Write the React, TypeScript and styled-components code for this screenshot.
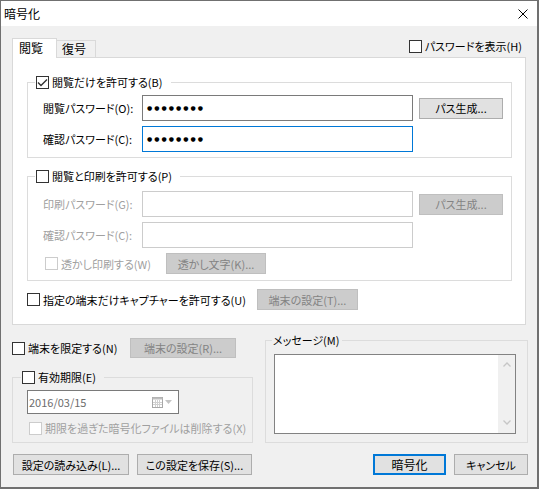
import React from "react";
import styled, { createGlobalStyle, css } from "styled-components";

const GlobalStyle = createGlobalStyle`
  html, body {
    margin: 0;
    padding: 0;
    background: #6f6f6f;
  }
  body {
    font-family: "Noto Sans CJK JP", "Noto Sans", sans-serif;
    font-size: 11px;
    color: #000;
    font-feature-settings: "palt";
  }
  #root {
    width: 539px;
    height: 489px;
  }
`;

/**
 * small parts
 */
function CheckBox({ checked, disabled }: { checked?: boolean; disabled?: boolean }) {
  return (
    <StyledBox $disabled={disabled}>
      {checked && (
        <svg width="11" height="11" viewBox="0 0 11 11">
          <polyline points="1,5.5 4,8.5 10,2.5" fill="none" stroke="#333" strokeWidth="1.4" />
        </svg>
      )}
    </StyledBox>
  );
}

function Check({
  label,
  checked,
  disabled,
}: {
  label: string;
  checked?: boolean;
  disabled?: boolean;
}) {
  return (
    <StyledCheck $disabled={disabled}>
      <CheckBox checked={checked} disabled={disabled} />
      <span>{label}</span>
    </StyledCheck>
  );
}

function Dots() {
  return <StyledDots>●●●●●●●●</StyledDots>;
}

export default function App() {
  return (
    <>
      <GlobalStyle />
      <Window>
        <TitleBar>
          <Title>暗号化</Title>
          <svg width="10" height="10" viewBox="0 0 10 10">
            <path d="M0.5 0.5 L9.5 9.5 M9.5 0.5 L0.5 9.5" stroke="#000" strokeWidth="1" />
          </svg>
        </TitleBar>

        <Body>
          <TabRow>
            <Tab $active>閲覧</Tab>
            <Tab>復号</Tab>
            <ShowPass>
              <Check label="パスワードを表示(H)" />
            </ShowPass>
          </TabRow>

          <Panel>
            <Group $mt={17}>
              <Legend $ml={7} $pr={8}>
                <Check label="閲覧だけを許可する(B)" checked />
              </Legend>
              <GroupBody $pad="6px 0 5px 15px">
                <FormRow>
                  <FieldLabel>閲覧パスワード(O):</FieldLabel>
                  <Field>
                    <Dots />
                  </Field>
                  <Button $w={84} $h={21}>パス生成...</Button>
                </FormRow>
                <FormRow>
                  <FieldLabel>確認パスワード(C):</FieldLabel>
                  <Field $state="focus">
                    <Dots />
                  </Field>
                </FormRow>
              </GroupBody>
            </Group>

            <Group $mt={11}>
              <Legend $ml={7} $pr={8}>
                <Check label="閲覧と印刷を許可する(P)" />
              </Legend>
              <GroupBody $pad="8px 0 6px 15px">
                <FormRow>
                  <FieldLabel $disabled>印刷パスワード(G):</FieldLabel>
                  <Field $state="disabled" />
                  <Button $w={84} $h={21} $kind="disabled">
                    パス生成...
                  </Button>
                </FormRow>
                <FormRow>
                  <FieldLabel $disabled>確認パスワード(C):</FieldLabel>
                  <Field $state="disabled" />
                </FormRow>
                <OptionRow $cols="121px 100px" $ml={2}>
                  <Check label="透かし印刷する(W)" disabled />
                  <Button $w={100} $h={21} $kind="disabled">
                    透かし文字(K)...
                  </Button>
                </OptionRow>
              </GroupBody>
            </Group>

            <OptionRow $cols="230px 101px" $mt={8}>
              <Check label="指定の端末だけキャプチャーを許可する(U)" />
              <Button $w={101} $h={21} $kind="disabled">
                端末の設定(T)...
              </Button>
            </OptionRow>
          </Panel>

          <BottomArea>
            <LeftColumn>
              <OptionRow $cols="118px 106px">
                <Check label="端末を限定する(N)" />
                <Button $w={106} $h={20} $kind="disabled">
                  端末の設定(R)...
                </Button>
              </OptionRow>

              <Group $mt={12}>
                <Legend $ml={8} $pr={8}>
                  <Check label="有効期限(E)" />
                </Legend>
                <GroupBody $pad="6px 0 7px 14px" $gap={7}>
                  <DatePicker>
                    <span>2016/03/15</span>
                    <PickerIcons>
                      <svg width="11" height="11" viewBox="0 0 11 11">
                        <rect x="0.5" y="0.5" width="10" height="10" fill="#fff" stroke="#a8a8a8" />
                        <rect x="0.5" y="0.5" width="10" height="2" fill="#bdbdbd" />
                        <path
                          d="M3.5 3 V10 M5.5 3 V10 M7.5 3 V10 M1 5.5 H10 M1 7.5 H10"
                          stroke="#d0d0d0"
                          strokeWidth="1"
                        />
                      </svg>
                      <svg width="7" height="4" viewBox="0 0 7 4">
                        <polygon points="0,0 7,0 3.5,4" fill="#c4c4c4" />
                      </svg>
                    </PickerIcons>
                  </DatePicker>
                  <ExpireRow>
                    <Check label="期限を過ぎた暗号化ファイルは削除する(X)" disabled />
                  </ExpireRow>
                </GroupBody>
              </Group>
            </LeftColumn>

            <Group $mt={0}>
              <Legend $ml={6} $pr={3}>
                <LegendText>メッセージ(M)</LegendText>
              </Legend>
              <GroupBody $pad="7px 11px 8px 8px">
                <MessageBox>
                  <MessageText />
                  <ScrollBar>
                    <svg width="8" height="5" viewBox="0 0 8 5">
                      <polyline points="0.5,4.5 4,1 7.5,4.5" fill="none" stroke="#c6c6c6" strokeWidth="1.3" />
                    </svg>
                    <svg width="8" height="5" viewBox="0 0 8 5">
                      <polyline points="0.5,0.5 4,4 7.5,0.5" fill="none" stroke="#c6c6c6" strokeWidth="1.3" />
                    </svg>
                  </ScrollBar>
                </MessageBox>
              </GroupBody>
            </Group>
          </BottomArea>

          <ButtonBar>
            <ButtonGroup>
              <Button $w={116} $h={21}>設定の読み込み(L)...</Button>
              <Button $w={115} $h={21}>この設定を保存(S)...</Button>
            </ButtonGroup>
            <ButtonGroup>
              <Button $w={73} $h={21} $kind="default">
                暗号化
              </Button>
              <Button $w={74} $h={21}>キャンセル</Button>
            </ButtonGroup>
          </ButtonBar>
        </Body>
      </Window>
    </>
  );
}

/**
 * styles
 */
const Window = styled.div`
  width: 539px;
  height: 489px;
  box-sizing: border-box;
  border: 1px solid #707070;
  border-right-width: 2px;
  border-bottom-width: 2px;
  display: flex;
  flex-direction: column;
  background: #f0f0f0;
`;

const TitleBar = styled.div`
  height: 25px;
  flex-shrink: 0;
  background: #fff;
  display: flex;
  align-items: center;
  justify-content: space-between;
  padding: 0 9px 0 3px;
  line-height: 14px;
`;

const Title = styled.span`
  font-size: 12px;
`;

const Body = styled.div`
  flex: 1;
  display: flex;
  flex-direction: column;
  padding: 12px 11px 0 11px;
`;

const TabRow = styled.div`
  height: 19px;
  display: flex;
  align-items: flex-end;
  position: relative;
  z-index: 1;
`;

const Tab = styled.div<{ $active?: boolean }>`
  box-sizing: border-box;
  display: flex;
  align-items: center;
  border: 1px solid #d9d9d9;
  border-bottom: none;
  line-height: 14px;
  font-size: 12px;
  ${({ $active }) =>
    $active
      ? css`
          width: 45px;
          height: 20px;
          margin-bottom: -1px;
          padding: 0 0 1px 6px;
          background: #fff;
        `
      : css`
          width: 40px;
          height: 17px;
          margin-left: -1px;
          padding: 0 0 0 5px;
          background: #f0f0f0;
        `}
`;

const ShowPass = styled.div`
  margin-left: auto;
  margin-right: 4px;
  align-self: flex-start;
  margin-top: 1px;
`;

const Panel = styled.div`
  height: 268px;
  box-sizing: border-box;
  flex-shrink: 0;
  background: #fff;
  border: 1px solid #d9d9d9;
  padding: 0 13px 0 14px;
  display: flex;
  flex-direction: column;
`;

const Group = styled.fieldset<{ $mt: number }>`
  margin: ${({ $mt }) => $mt}px 0 0 0;
  min-width: 0;
  border: 1px solid #dcdcdc;
  padding: 0;
`;

const Legend = styled.legend<{ $ml: number; $pr: number }>`
  margin-left: ${({ $ml }) => $ml}px;
  padding: 0 ${({ $pr }) => $pr}px 0 1px;
  height: 14px;
  line-height: 14px;
`;

const GroupBody = styled.div<{ $pad: string; $gap?: number }>`
  display: flex;
  flex-direction: column;
  gap: ${({ $gap }) => $gap ?? 5}px;
  padding: ${({ $pad }) => $pad};
`;

const LegendText = styled.span`
  white-space: nowrap;
`;

const FormRow = styled.div`
  display: flex;
  align-items: center;
  height: 26px;
`;

const FieldLabel = styled.span<{ $disabled?: boolean }>`
  width: 99px;
  flex-shrink: 0;
  white-space: nowrap;
  line-height: 14px;
  color: ${({ $disabled }) => ($disabled ? "#a0a0a0" : "#000")};
`;

const Field = styled.div<{ $state?: "normal" | "focus" | "disabled" }>`
  width: 271px;
  height: 26px;
  box-sizing: border-box;
  flex-shrink: 0;
  background: #fff;
  display: flex;
  align-items: center;
  padding-left: 4px;
  border: 1px solid
    ${({ $state }) =>
      $state === "focus" ? "#0078d7" : $state === "disabled" ? "#cccccc" : "#7a7a7a"};
  & + button {
    margin-left: 6px;
  }
`;

const StyledDots = styled.span`
  font-family: "DejaVu Sans", sans-serif;
  font-size: 6px;
  letter-spacing: 2px;
  line-height: 10px;
  color: #000;
`;

const Button = styled.button<{ $w: number; $h: number; $kind?: "normal" | "default" | "disabled" }>`
  width: ${({ $w }) => $w}px;
  height: ${({ $h }) => $h}px;
  box-sizing: border-box;
  flex-shrink: 0;
  margin: 0;
  padding: 0;
  font: inherit;
  line-height: 14px;
  white-space: nowrap;
  display: flex;
  align-items: center;
  justify-content: center;
  ${({ $kind }) =>
    $kind === "disabled"
      ? css`
          background: #cccccc;
          border: 1px solid #bfbfbf;
          color: #838383;
        `
      : $kind === "default"
      ? css`
          background: #e1e1e1;
          border: 2px solid #0078d7;
          color: #000;
          font-size: 12px;
        `
      : css`
          background: #e1e1e1;
          border: 1px solid #adadad;
          color: #000;
        `}
`;

const StyledBox = styled.span<{ $disabled?: boolean }>`
  width: 13px;
  height: 13px;
  box-sizing: border-box;
  flex-shrink: 0;
  background: #fff;
  border: 1px solid ${({ $disabled }) => ($disabled ? "#cccccc" : "#333333")};
  display: flex;
  align-items: center;
  justify-content: center;
`;

const StyledCheck = styled.label<{ $disabled?: boolean }>`
  display: inline-flex;
  align-items: center;
  gap: 3px;
  white-space: nowrap;
  line-height: 14px;
  color: ${({ $disabled }) => ($disabled ? "#a0a0a0" : "#000")};
`;

const OptionRow = styled.div<{ $cols: string; $ml?: number; $mt?: number }>`
  display: grid;
  grid-template-columns: ${({ $cols }) => $cols};
  align-items: center;
  margin-left: ${({ $ml }) => $ml ?? 0}px;
  margin-top: ${({ $mt }) => $mt ?? 0}px;
`;

const BottomArea = styled.div`
  display: grid;
  grid-template-columns: 241px 263px;
  column-gap: 12px;
  margin: 8px -2px 0 0;
`;

const LeftColumn = styled.div`
  display: flex;
  flex-direction: column;
  padding-top: 5px;
`;

const DatePicker = styled.div`
  width: 152px;
  height: 24px;
  box-sizing: border-box;
  border: 1px solid #7a7a7a;
  background: #fff;
  display: flex;
  align-items: center;
  padding: 0 6px 0 1px;
  color: #6d6d6d;
  line-height: 14px;
`;

const PickerIcons = styled.div`
  margin-left: auto;
  display: flex;
  align-items: center;
  gap: 2px;
`;

const ExpireRow = styled.div`
  height: 14px;
  margin-left: 2px;
  display: flex;
  align-items: center;
`;

const MessageBox = styled.div`
  height: 80px;
  box-sizing: border-box;
  border: 1px solid #828282;
  background: #fff;
  display: flex;
`;

const MessageText = styled.div`
  flex: 1;
`;

const ScrollBar = styled.div`
  width: 17px;
  background: #f0f0f0;
  display: flex;
  flex-direction: column;
  align-items: center;
  justify-content: space-between;
  padding: 7px 0 8px;
`;

const ButtonBar = styled.div`
  display: flex;
  justify-content: space-between;
  margin: 11px -2px 0 1px;
`;

const ButtonGroup = styled.div`
  display: flex;
  gap: 8px;
`;
